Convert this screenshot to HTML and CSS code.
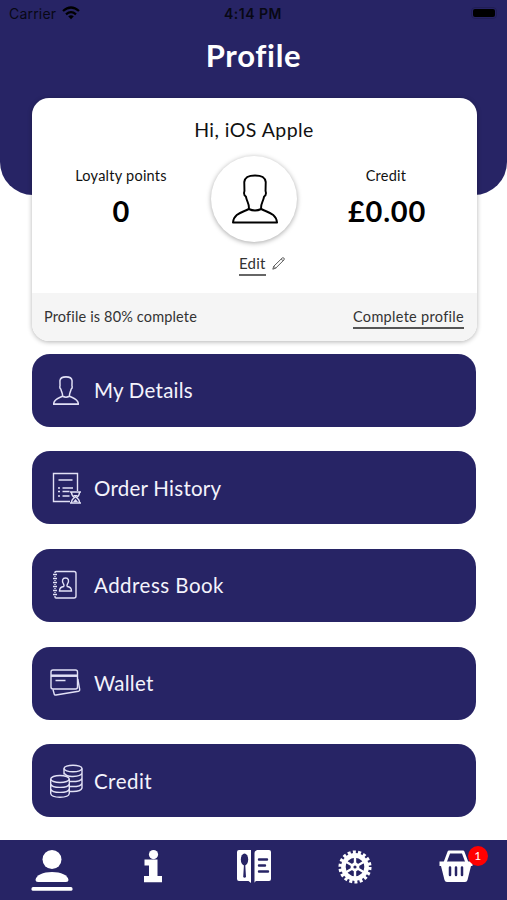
FILE: index.html
```html
<!DOCTYPE html>
<html lang="en">
<head>
<meta charset="utf-8">
<title>Profile</title>
<link rel="stylesheet" href="styles.css">
</head>
<body>
<svg class="defs" width="0" height="0" aria-hidden="true">
  <symbol id="person" viewBox="0 0 48 50"><path d="M17.500 35C18.500 30 15.500 28 14.500 22.500C12.800 21.500 12.300 19 13 17L12.800 8C13.500 3 17 1.500 24 1.500S34.500 3 35.200 8L35 17C35.700 19 35.200 21.500 33.500 22.500C32.500 28 29.500 30 30.500 35C37 38.500 46 39 47 48.500H1C2 39 11 38.500 17.500 35ZM17.500 35Q24 38 30.500 35" fill="none" stroke="currentColor" stroke-linejoin="round"/></symbol>
</svg>
<div class="app">
  <header class="header">
    <div class="status">
      <div class="carrier"><span>Carrier</span>
        <svg width="18" height="14" viewBox="0 0 18 14" fill="none" stroke="#000" stroke-width="2.300"><path d="M1 5Q9-2 17 5M4 8.300Q9 4 14 8.300"/><path d="M6.200 10.300Q9 8 11.800 10.300L9 13.300Z" fill="#000" stroke="none"/></svg>
      </div>
      <span class="time">4:14 PM</span>
      <div class="battery"><i></i></div>
    </div>
    <h1>Profile</h1>
  </header>
  <section class="card">
    <h2>Hi, iOS Apple</h2>
    <div class="summary">
      <div class="stat"><span>Loyalty points</span><strong>0</strong></div>
      <div class="avatar"><svg width="46" height="50" viewBox="0 0 48 50" preserveAspectRatio="none"><use href="#person"/></svg></div>
      <div class="stat"><span>Credit</span><strong class="amount">£0.00</strong></div>
    </div>
    <div class="edit"><a>Edit</a>
      <svg width="13" height="13" viewBox="0 0 13 13" fill="none" stroke="#333" stroke-width=".8"><path d="M.8 12.200L1.800 9.200L10.200 1Q11 .4 11.900 1.100T12 2.900L3.700 11.200ZM1.800 9.200L3.700 11.200M9.300 2L11 3.800"/></svg>
    </div>
    <div class="progress"><span>Profile is 80% complete</span><a>Complete profile</a></div>
  </section>
  <nav class="menu">
    <a class="item"><span class="icon"><svg class="thin" width="26" height="29" viewBox="0 0 48 50" preserveAspectRatio="none"><use href="#person"/></svg></span><span>My Details</span></a>
    <a class="item"><span class="icon"><svg width="34" height="34" viewBox="0 0 34 34" fill="none" stroke="currentColor" stroke-width="1.400"><path d="M21 30.500H4.500V2.500H28.500V20M9.500 9H23.500M13.500 17H24M13.500 20.500H20.500M13.500 25H20.500M9 17h2M9 20.500h2M9 25h2"/><path d="M21 21H32M21 32H32M22.500 21.500Q22.500 24.500 25.500 26.500Q22.500 28.500 22.500 31.500M30.500 21.500Q30.500 24.500 27.500 26.500Q30.500 28.500 30.500 31.500"/><path d="M24 24H29L26.500 26.500ZM24 31L26.500 28L29 31Z" fill="currentColor" stroke="none"/></svg></span><span>Order History</span></a>
    <a class="item"><span class="icon"><svg width="34" height="34" viewBox="0 0 34 34" fill="none" stroke="currentColor" stroke-width="1.400"><path d="M6 5V4.500Q6 3.500 7 3.500H25Q27 3.500 27 5.500V28Q27 30 25 30H7Q6 30 6 29V28M6 8v1M6 12v1M6 16v1M6 20v1M6 24v1M4 6.500h4M4 10.500h4M4 14.500h4M4 18.500h4M4 22.500h4M4 26.500h4"/><path d="M14.700 18.500Q15.500 17.500 14.500 16C12.500 12.500 13.500 10 16.500 10S20.500 12.500 18.500 16Q17.500 17.500 18.300 18.500Q22.500 19 22.500 23H10.500Q10.500 19 14.700 18.500Z"/></svg></span><span class="wide">Address Book</span></a>
    <a class="item"><span class="icon"><svg width="34" height="34" viewBox="0 0 34 34" fill="none" stroke="currentColor" stroke-width="1.400"><rect x="2" y="4" width="26.500" height="19" rx="2"/><path d="M2 9.700H28.500" stroke-width="2.500"/><path d="M6.500 14.500H16.500M4 23.500L5.200 28Q5.500 29.300 7 29L29.500 25.200Q31 24.800 30.700 23.300L28.800 13"/></svg></span><span>Wallet</span></a>
    <a class="item"><span class="icon"><svg width="34" height="34" viewBox="0 0 34 34" fill="none" stroke="currentColor" stroke-width="1.400"><ellipse cx="24" cy="4.500" rx="9" ry="3.300"/><path d="M15 4.500V10.500M33 4.500V24Q32 27.500 24 27.500H21M15 9Q18 13 24 12.500Q32 12 33 9.200M20 17.500Q32 18 33 14.200M21 22.500Q32 23 33 19.200"/><ellipse cx="11" cy="15" rx="9.300" ry="3.500"/><path d="M1.700 15V29.500C2.500 34.500 19.500 34.500 20.300 29.500V15M1.700 20C3 24.500 19 24.500 20.300 20M1.700 25C3 29.500 19 29.500 20.300 25"/></svg></span><span class="wide">Credit</span></a>
  </nav>
  <nav class="tabs">
    <a class="tab"><svg width="42" height="42" viewBox="0 0 42 42" fill="#fff"><circle cx="21" cy="9.500" r="9.500"/><path d="M4.500 30C5 25 12 22 21 22S37 25 37.500 30Q37.500 32 35 32H7Q4.500 32 4.500 30Z"/><rect x=".5" y="37" width="41" height="3.800" rx="1.500"/></svg></a>
    <a class="tab"><svg width="20" height="34" viewBox="0 0 20 34" fill="#fff"><circle cx="10.500" cy="4.600" r="4.600"/><path d="M1.500 9.500H14.500V26H19V32.300H1V26H6V15.500H1.500Z"/></svg></a>
    <a class="tab"><svg width="36" height="34" viewBox="0 0 36 34" fill="#fff"><path d="M3 0H15V33L12.500 31H3Q1 31 1 29V2Q1 0 3 0ZM21 0H33Q35 0 35 2V29Q35 31 33 31H20Q18.500 32 18.500 33V3Q18.500 1 21 0Z"/><g fill="#272465"><ellipse cx="8.500" cy="9.500" rx="3.700" ry="6"/><path d="M8 14H9.200L10 27Q8.500 28.500 7.200 27Z"/></g><path d="M23 9.500H31M23 15.500H29M23 21.500H32" stroke="#272465" stroke-width="2.400" stroke-linecap="round"/></svg></a>
    <a class="tab"><svg width="34" height="34" viewBox="-17 -17 34 34" fill="none" stroke="#fff"><circle r="14.800" stroke-width="3.500" stroke-dasharray="3 2.166"/><circle r="11.600" stroke-width="4.600"/><circle r="3" stroke-width="2.800"/><path d="M0-3V-11M2.600-1.500L9.500-5.500M2.600 1.500L9.500 5.500M0 3V11M-2.600 1.500L-9.500 5.500M-2.600-1.500L-9.500-5.500" stroke-width="2.400"/></svg></a>
    <a class="tab basket"><svg width="36" height="33" viewBox="0 0 36 33"><path d="M6.500 14L11 2H25L29.500 14" fill="none" stroke="#fff" stroke-width="3" stroke-linejoin="round"/><path d="M1.500 11.500H34.500V16H33L29.500 30Q29 32 27 32H9Q7 32 6.500 30L3 16H1.500Z" fill="#fff"/><path d="M12 17.500V25M18 17.500V25M24 17.500V25" stroke="#272465" stroke-width="2.500" stroke-linecap="round"/></svg><span class="badge">1</span></a>
  </nav>
</div>
</body>
</html>
```
FILE: styles.css
```css
* { box-sizing: border-box; }
body { margin: 0; background: #fff; font-family: Lato, "Liberation Sans", sans-serif; color: #111; }
.defs { display: block; }
.app { width: 507px; height: 900px; overflow: hidden; display: flex; flex-direction: column; }
.header { height: 195px; flex: none; background: #272465; border-radius: 0 0 33px 33px; }
.status { height: 28px; padding: 0 10px 0 9px; display: grid; grid-template-columns: 1fr auto 1fr; align-items: center; color: #080814; font: 14px/28px Inter, sans-serif; }
.carrier { display: flex; align-items: center; gap: 6px; letter-spacing: .2px; }
.carrier svg { margin-top: -2px; }
.time { font-weight: 600; letter-spacing: .5px; }
.battery { justify-self: end; width: 26px; height: 12px; padding: 1px; border: 1px solid #211e56; border-radius: 4px; margin-top: -2px; }
.battery i { display: block; height: 8px; background: #000; border-radius: 2px; }
h1 { margin: 8px 0 0; font-size: 31px; line-height: 38px; text-align: center; color: #fff; letter-spacing: .7px; }
.card { flex: none; width: 445px; height: 243px; margin: -97px 0 0 31.500px; background: #fff; border-radius: 17px; box-shadow: 0 1px 5px rgba(0,0,0,.3); overflow: hidden; display: flex; flex-direction: column; }
h2 { margin: 19px 0 0; font-size: 19.500px; line-height: 26px; font-weight: 400; text-align: center; letter-spacing: .45px; }
.summary { display: grid; grid-template-columns: 179px 86px 179px; margin-top: 13px; }
.stat { display: flex; flex-direction: column; align-items: center; padding-top: 8px; height: 87px; }
.stat span { font-size: 14.500px; line-height: 24px; letter-spacing: .25px; }
.stat strong { font-size: 29px; line-height: 36px; margin-top: 5px; color: #000; }
.stat .amount { letter-spacing: .8px; padding-left: 2px; }
.avatar { width: 86px; height: 86px; border-radius: 50%; box-shadow: 0 1px 5px rgba(0,0,0,.35); display: flex; align-items: center; justify-content: center; padding-left: 2px; color: #000; stroke-width: 2; }
.edit { height: 50px; padding: 9px 0 0 207.500px; display: flex; align-items: flex-start; gap: 6px; font-size: 15px; color: #333; }
.edit a { line-height: 22px; border-bottom: 2px solid #666; letter-spacing: .2px; }
.edit svg { margin-top: 5px; }
.progress { flex: 1; background: #f5f5f5; padding: 0 12.500px 1px; display: flex; justify-content: space-between; align-items: center; font-size: 14.500px; color: #333; letter-spacing: .15px; }
.progress a { line-height: 21px; border-bottom: 2px solid #555; margin-top: 2px; letter-spacing: .3px; }
.menu { display: flex; flex-direction: column; gap: 24.700px; padding: 12.500px 31px 0 31.500px; flex: none; }
.item { height: 73px; border-radius: 18px; background: #272465; color: #f4f3fc; display: flex; align-items: center; font-size: 20.500px; letter-spacing: .25px; }
.item .wide { letter-spacing: .48px; }
.icon { width: 34px; height: 34px; margin: 0 11.500px 0 17px; display: flex; align-items: center; justify-content: center; color: #e2e1f6; }
.thin { stroke-width: 2.700; }
.tabs { height: 60px; margin-top: auto; flex: none; background: #272465; display: grid; grid-template-columns: repeat(5, 1fr); padding-left: 1px; }
.tab { display: flex; justify-content: center; align-items: flex-start; padding-top: 10px; position: relative; }
.badge { position: absolute; left: 62px; top: 6px; width: 20px; height: 20px; border-radius: 50%; background: #f00; color: #fff; font-size: 12px; line-height: 20px; text-align: center; }
```
